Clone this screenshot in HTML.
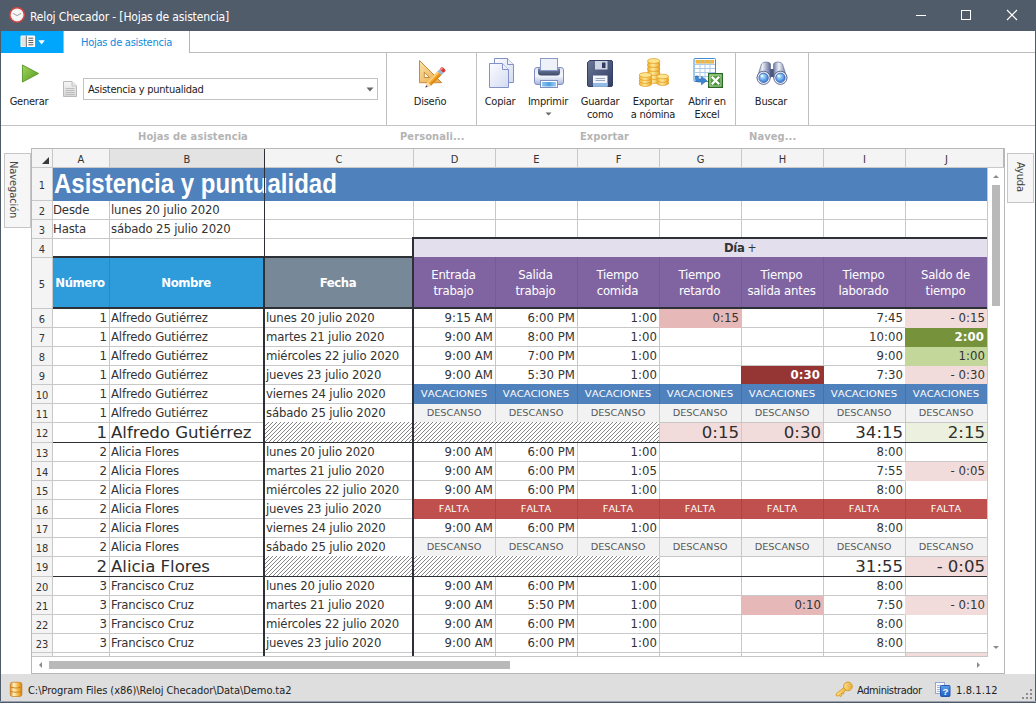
<!DOCTYPE html>
<html lang="es"><head><meta charset="utf-8"><title>Reloj Checador - [Hojas de asistencia]</title>
<style>
html,body{margin:0;padding:0;}
body{width:1036px;height:703px;overflow:hidden;background:#fff;position:relative;font-family:'DejaVu Sans Condensed','Liberation Sans',sans-serif;font-size:11px;color:#222;}
div{position:absolute;box-sizing:border-box;white-space:nowrap;overflow:hidden;}
svg{position:absolute;overflow:visible;}
.c{font-family:'DejaVu Sans Condensed','Liberation Sans',sans-serif;font-size:13px;line-height:17px;color:#333;letter-spacing:-0.15px;}
.r{text-align:right;padding-right:2px;letter-spacing:0.05px;}
.l{text-align:left;padding-left:1px;}
.m{text-align:center;}
.rh{font-family:'DejaVu Sans Condensed','Liberation Sans',sans-serif;font-size:11px;color:#333;text-align:center;background:#f4f4f4;}
.tag{font-family:'DejaVu Sans','Liberation Sans',sans-serif;font-size:9px;line-height:18px;text-align:center;font-kerning:none;}
.big{font-family:'DejaVu Sans','Liberation Sans',sans-serif;font-size:16.6px;line-height:19px;color:#2e2e2e;letter-spacing:-0.03px;}
.lbl{font-size:11px;color:#222;text-align:center;line-height:13px;letter-spacing:-0.25px;}
.cap{font-size:11px;font-weight:bold;color:#b4b4b4;letter-spacing:0.1px;}
.ph{font-family:'DejaVu Sans Condensed','Liberation Sans',sans-serif;font-size:13px;color:#fff;text-align:center;line-height:16px;background:#8064a2;letter-spacing:-0.2px;}
</style></head><body>

<div style="left:0px;top:0px;width:1036px;height:703px;background:#fff;border:1px solid #4f5a69;border-top:0;"></div>
<div style="left:0px;top:0px;width:1036px;height:31px;background:#515c6b;"></div>
<svg style="left:8px;top:6px" width="18" height="18" viewBox="0 0 18 18"><circle cx="9.1" cy="8.9" r="7.2" fill="#ececec" stroke="#d8423c" stroke-width="1.4"/><circle cx="9.1" cy="8.9" r="5.6" fill="#f7f7f7"/><path d="M5.2 7.4 L9.1 9.6 L13 7.4" fill="none" stroke="#9a9a9a" stroke-width="1"/></svg>
<div style="left:30px;top:8px;width:400px;height:18px;color:#fff;font-size:12px;line-height:18px;letter-spacing:-0.15px;">Reloj Checador - [Hojas de asistencia]</div>
<svg style="left:900px;top:0" width="136" height="31" viewBox="0 0 136 31"><path d="M16 15.5H26" stroke="#fff" stroke-width="1"/><rect x="61.5" y="10.5" width="9" height="9" fill="none" stroke="#fff" stroke-width="1"/><path d="M107 10L117 20M117 10L107 20" stroke="#fff" stroke-width="1.1"/></svg>
<div style="left:1px;top:31px;width:62px;height:22px;background:#00a5fc;"></div>
<svg style="left:20px;top:35px" width="26" height="13" viewBox="0 0 26 13"><rect x="0.5" y="0.5" width="14.6" height="11.6" rx="1.2" fill="#fff"/><rect x="1.4" y="1.4" width="4.2" height="9.8" fill="#e4e4e4"/><path d="M6.3 0.8V12" stroke="#555" stroke-width="0.9"/><path d="M8.4 3.2H13.3M8.4 5.4H13.3M8.4 7.6H13.3M8.4 9.8H13.3" stroke="#444" stroke-width="0.9"/><path d="M18.4 5.3h6.4l-3.2 4.2z" fill="#fff"/></svg>
<div style="left:189px;top:52px;width:846px;height:1px;background:#bdbdbd;"></div>
<div style="left:63px;top:31px;width:127px;height:22px;border:1px solid #b4b4b4;border-top:0;border-bottom:0;background:#fff;color:#0d8bdc;font-size:11px;line-height:24px;text-align:center;letter-spacing:-0.25px;">Hojas de asistencia</div>
<div style="left:1px;top:125px;width:1034px;height:1px;background:#c4c4c4;"></div>
<div style="left:386px;top:53px;width:1px;height:72px;background:#c0c0c0;"></div>
<div style="left:476px;top:53px;width:1px;height:72px;background:#c0c0c0;"></div>
<div style="left:735px;top:53px;width:1px;height:72px;background:#c0c0c0;"></div>
<div style="left:808px;top:53px;width:1px;height:72px;background:#c0c0c0;"></div>
<svg style="left:21px;top:63px" width="19" height="22" viewBox="0 0 20 22"><defs><linearGradient id="gp" x1="0" y1="0" x2="1" y2="1"><stop offset="0" stop-color="#a6d55a"/><stop offset="1" stop-color="#4e9a1e"/></linearGradient></defs><path d="M1.5 1.5L18.5 10.5L1.5 19.5Z" fill="url(#gp)" stroke="#5a9a2a" stroke-width="1"/></svg>
<div class="lbl" style="left:0px;top:95px;width:58px;height:14px;">Generar</div>
<svg style="left:62px;top:81px" width="16" height="17" viewBox="0 0 16 17"><defs><linearGradient id="gd" x1="0" y1="0" x2="0" y2="1"><stop offset="0" stop-color="#f6f6f6"/><stop offset="1" stop-color="#d6d6d6"/></linearGradient></defs><path d="M1.5 0.5H10L14.5 5V15.5H1.5Z" fill="url(#gd)" stroke="#b9b9b9"/><path d="M10 0.5V5H14.5" fill="#e9e9e9" stroke="#c4c4c4"/><path d="M3.5 7.5H12.5M3.5 9.5H12.5M3.5 11.5H12.5M3.5 13.5H12.5" stroke="#bdbdbd"/></svg>
<div style="left:83px;top:78px;width:295px;height:22px;border:1px solid #c3c3c3;background:#fff;font-size:11px;line-height:22px;padding-left:4px;color:#222;letter-spacing:-0.25px;">Asistencia y puntualidad</div>
<svg style="left:366px;top:87px" width="8" height="5" viewBox="0 0 8 5"><path d="M0.5 0.5H7.5L4 4.5Z" fill="#666"/></svg>
<div class="lbl" style="left:395px;top:95px;width:70px;height:14px;">Diseño</div>
<div class="lbl" style="left:465px;top:95px;width:70px;height:14px;">Copiar</div>
<div class="lbl" style="left:513px;top:95px;width:70px;height:14px;">Imprimir</div>
<div class="lbl" style="left:565px;top:95px;width:70px;height:14px;">Guardar</div>
<div class="lbl" style="left:565px;top:108px;width:70px;height:14px;">como</div>
<div class="lbl" style="left:618px;top:95px;width:70px;height:14px;">Exportar</div>
<div class="lbl" style="left:618px;top:108px;width:70px;height:14px;">a nómina</div>
<div class="lbl" style="left:672px;top:95px;width:70px;height:14px;">Abrir en</div>
<div class="lbl" style="left:672px;top:108px;width:70px;height:14px;">Excel</div>
<div class="lbl" style="left:736px;top:95px;width:70px;height:14px;">Buscar</div>
<svg style="left:545px;top:112px" width="7" height="4" viewBox="0 0 7 4"><path d="M0.5 0.5H6.5L3.5 3.5Z" fill="#666"/></svg>
<svg style="left:0;top:0" width="1036" height="126" viewBox="0 0 1036 126">
<defs>
<linearGradient id="gTri" x1="0" y1="0" x2="1" y2="1"><stop offset="0" stop-color="#fbe3a8"/><stop offset="1" stop-color="#e9a94a"/></linearGradient>
<linearGradient id="gPage" x1="0" y1="0" x2="1" y2="1"><stop offset="0" stop-color="#fbfcff"/><stop offset="1" stop-color="#d4dbf1"/></linearGradient>
<linearGradient id="gPrn" x1="0" y1="0" x2="0" y2="1"><stop offset="0" stop-color="#dfe5f5"/><stop offset="0.5" stop-color="#f4f6fc"/><stop offset="1" stop-color="#a9b6dc"/></linearGradient>
<linearGradient id="gSlot" x1="0" y1="0" x2="0" y2="1"><stop offset="0" stop-color="#7482a6"/><stop offset="1" stop-color="#3d4866"/></linearGradient>
<linearGradient id="gBlueP" x1="0" y1="0" x2="1" y2="0"><stop offset="0" stop-color="#8fc5f0"/><stop offset="0.5" stop-color="#4f9fe0"/><stop offset="1" stop-color="#9fd0f4"/></linearGradient>
<linearGradient id="gFlop" x1="0" y1="0" x2="1" y2="1"><stop offset="0" stop-color="#6b7795"/><stop offset="1" stop-color="#2f3b63"/></linearGradient>
<linearGradient id="gCoin" x1="0" y1="0" x2="1" y2="0"><stop offset="0" stop-color="#f4b332"/><stop offset="0.45" stop-color="#fde89a"/><stop offset="1" stop-color="#eea520"/></linearGradient>
<linearGradient id="gBar" x1="0" y1="0" x2="1" y2="0"><stop offset="0" stop-color="#6f7da3"/><stop offset="0.4" stop-color="#eef1f8"/><stop offset="1" stop-color="#59678f"/></linearGradient>
<radialGradient id="gLens" cx="0.4" cy="0.35" r="0.7"><stop offset="0" stop-color="#cfe6fb"/><stop offset="0.5" stop-color="#6fb0ee"/><stop offset="1" stop-color="#2f6fd0"/></radialGradient>
<linearGradient id="gXl" x1="0" y1="0" x2="1" y2="1"><stop offset="0" stop-color="#6fb04a"/><stop offset="1" stop-color="#2f7d2a"/></linearGradient>
</defs>
<!-- Diseño -->
<path d="M419.5 60.5V82.7H441.7Z M424.3 72.2L429.6 77.5H424.3Z" fill="url(#gTri)" fill-rule="evenodd" stroke="#c98a35" stroke-width="1" stroke-linejoin="round"/>
<g transform="translate(425.4 87.5) rotate(-45.5)">
<path d="M0 0L5.5 -2.6H20.5V2.6H5.5Z" fill="#f3a62c"/>
<path d="M5.5 -2.6H20.5V-0.9H5.5Z" fill="#fbd27a"/>
<path d="M5.5 0.9H20.5V2.6H5.5Z" fill="#d98714"/>
<path d="M0 0L5.5 -2.6V2.6Z" fill="#f6dcb0"/>
<path d="M0 0L2.2 -1.05V1.05Z" fill="#2d3f78"/>
<rect x="20" y="-2.7" width="3" height="5.4" fill="#9fb3d8"/>
<rect x="23" y="-2.7" width="3.6" height="5.4" rx="1" fill="#cf3a33"/>
<rect x="23" y="-2.7" width="3.6" height="2" rx="1" fill="#ef8a80"/>
</g>
<!-- Copiar -->
<path d="M494.5 58.5H507.5L513.5 64.5V82.5H494.5Z" fill="url(#gPage)" stroke="#8392c6" stroke-width="1" stroke-linejoin="round"/>
<path d="M507.5 58.5V64.5H513.5" fill="#eef1fb" stroke="#8392c6" stroke-width="1" stroke-linejoin="round"/>
<path d="M489.5 63.5H502.5L508.5 69.5V87.5H489.5Z" fill="url(#gPage)" stroke="#8392c6" stroke-width="1" stroke-linejoin="round"/>
<path d="M502.5 63.5V69.5H508.5" fill="#eef1fb" stroke="#8392c6" stroke-width="1" stroke-linejoin="round"/>
<!-- Imprimir -->
<rect x="534.5" y="67.5" width="29" height="17" rx="2.5" fill="url(#gPrn)" stroke="#7f8fc2"/>
<path d="M538 68.5H560V72.5Q560 75.5 557 75.5H541Q538 75.5 538 72.5Z" fill="url(#gSlot)"/>
<rect x="540.5" y="58.5" width="17" height="12" fill="#eef1fa" stroke="#8a98c8"/>
<rect x="540.5" y="80.5" width="17" height="7" fill="#fff" stroke="#7f8fc2"/>
<rect x="542" y="82" width="14" height="4.5" fill="url(#gBlueP)"/>
<!-- Guardar -->
<path d="M589.5 60.5H611Q612.5 60.5 612.5 62V85Q612.5 86.5 611 86.5H589Q587.5 86.5 587.5 85V62.5Z" fill="url(#gFlop)" stroke="#333f66"/>
<rect x="595" y="61" width="12.5" height="8.5" fill="#cfd5e4"/>
<rect x="602" y="62.5" width="3.5" height="5.5" fill="#2f3b63"/>
<rect x="593" y="75.5" width="14.5" height="11" fill="#f4f6fb"/>
<rect x="593" y="83" width="14.5" height="3.5" fill="#8ebbe8"/>
<path d="M595.5 78.5H605M595.5 80.5H605" stroke="#9aa6c6" stroke-width="1"/>
<!-- Exportar a nómina : coins -->
<g stroke="#e09a1c" stroke-width="0.7">
<g id="cs1"><rect x="647.5" y="61" width="12.5" height="20" fill="url(#gCoin)" stroke="none"/>
<ellipse cx="653.7" cy="81" rx="6.2" ry="2.4" fill="url(#gCoin)"/>
<ellipse cx="653.7" cy="77" rx="6.2" ry="2.4" fill="url(#gCoin)"/>
<ellipse cx="653.7" cy="73" rx="6.2" ry="2.4" fill="url(#gCoin)"/>
<ellipse cx="653.7" cy="69" rx="6.2" ry="2.4" fill="url(#gCoin)"/>
<ellipse cx="653.7" cy="65" rx="6.2" ry="2.4" fill="url(#gCoin)"/>
<ellipse cx="653.7" cy="61" rx="6.2" ry="2.4" fill="#fde48e"/></g>
<rect x="639.2" y="75" width="12.4" height="9" fill="url(#gCoin)" stroke="none"/>
<ellipse cx="645.4" cy="84" rx="6.2" ry="2.4" fill="url(#gCoin)"/>
<ellipse cx="645.4" cy="81" rx="6.2" ry="2.4" fill="url(#gCoin)"/>
<ellipse cx="645.4" cy="78" rx="6.2" ry="2.4" fill="url(#gCoin)"/>
<ellipse cx="645.4" cy="75" rx="6.2" ry="2.4" fill="#fde48e"/>
<rect x="656.8" y="76" width="11.8" height="7.5" fill="url(#gCoin)" stroke="none"/>
<ellipse cx="662.7" cy="83.2" rx="5.9" ry="2.3" fill="url(#gCoin)"/>
<ellipse cx="662.7" cy="80" rx="5.9" ry="2.3" fill="url(#gCoin)"/>
<ellipse cx="662.7" cy="76.5" rx="5.9" ry="2.3" fill="#fde48e"/>
</g>
<!-- Abrir en Excel -->
<rect x="694" y="58.5" width="21.5" height="23" rx="1" fill="#fff" stroke="#3f8fd0"/>
<rect x="695.5" y="60" width="18.5" height="3.6" fill="#f3b43a"/>
<path d="M695 64.5H715M695 68.5H715M695 72.5H715M695 76.5H715M700 60V81M705 60V81M710 60V81" stroke="#a9cbe8" stroke-width="1"/>
<path d="M695.5 76V79.5Q695.5 82 698.5 82H701.5V84.8L706.8 80.6L701.5 76.4V79H699Q698.3 79 698.3 78V76Z" fill="#3f86d2" stroke="#2a62a8" stroke-width="0.6"/>
<rect x="708.5" y="73.5" width="14" height="14" fill="url(#gXl)" stroke="#2a6a26"/>
<rect x="710" y="75" width="11" height="11" fill="none" stroke="#cfe6c4" stroke-width="0.8"/>
<path d="M711.8 76.8L719.2 84.2M719.2 76.8L711.8 84.2" stroke="#fff" stroke-width="2.2"/>
<!-- Buscar -->
<rect x="768.5" y="69" width="7" height="8" fill="#4a5680"/>
<path d="M761.5 64Q762.5 62 766 62Q770 62 770.5 64L770.5 78H757Z" fill="url(#gBar)" stroke="#55628a" stroke-width="0.6"/>
<path d="M782.5 64Q781.5 62 778 62Q774 62 773.5 64L773.5 78H787Z" fill="url(#gBar)" stroke="#55628a" stroke-width="0.6"/>
<circle cx="763.6" cy="77.8" r="6.6" fill="#eef1f8" stroke="#4f5c86" stroke-width="0.9"/>
<circle cx="780.4" cy="77.8" r="6.6" fill="#eef1f8" stroke="#4f5c86" stroke-width="0.9"/>
<circle cx="763.6" cy="77.8" r="4.7" fill="url(#gLens)" stroke="#2c55a8" stroke-width="0.7"/>
<circle cx="780.4" cy="77.8" r="4.7" fill="url(#gLens)" stroke="#2c55a8" stroke-width="0.7"/>
<circle cx="762" cy="76" r="1.3" fill="#eaf4fd"/><circle cx="778.8" cy="76" r="1.3" fill="#eaf4fd"/>
</svg>

<div class="cap" style="left:138px;top:130px;width:140px;height:14px;">Hojas de asistencia</div>
<div class="cap" style="left:400px;top:130px;width:80px;height:14px;">Personali...</div>
<div class="cap" style="left:580px;top:130px;width:80px;height:14px;">Exportar</div>
<div class="cap" style="left:749px;top:130px;width:80px;height:14px;">Naveg...</div>
<div style="left:4px;top:153px;width:27px;height:75px;border:1px solid #c6c6c6;background:#f6f6f6;"></div>
<div style="left:3px;top:161px;width:20px;height:64px;writing-mode:vertical-rl;font-size:11px;color:#444;line-height:20px;letter-spacing:-0.1px;">Navegación</div>
<div style="left:1007px;top:153px;width:27px;height:50px;border:1px solid #c6c6c6;background:#f6f6f6;"></div>
<div style="left:1010px;top:162px;width:20px;height:40px;writing-mode:vertical-rl;font-size:11px;color:#444;line-height:20px;letter-spacing:-0.1px;">Ayuda</div>
<svg width="0" height="0" style="left:0;top:0"><defs><pattern id="hatch" width="4" height="4" patternUnits="userSpaceOnUse"><rect width="4" height="4" fill="#fff"/><path d="M-1 1L1 -1M-0.5 4.5L4.5 -0.5M3 5L5 3" stroke="#5a5a5a" stroke-width="0.75"/></pattern></defs></svg>
<div style="left:31px;top:148px;width:974px;height:526px;border:1px solid #b8b8b8;background:#fff;"></div>
<div style="left:32px;top:149px;width:971px;height:18px;background:#f4f4f4;"></div>
<div style="left:1003px;top:149px;width:1px;height:19px;background:#b8b8b8;"></div>
<div style="left:32px;top:149px;width:21px;height:507px;background:#f4f4f4;"></div>
<div style="left:110px;top:149px;width:154px;height:18px;background:#e3e3e3;"></div>
<svg style="left:42px;top:157px" width="7" height="7" viewBox="0 0 7 7"><path d="M7 0V7H0Z" fill="#3a3a3a"/></svg>
<div style="left:32px;top:167px;width:972px;height:1px;background:#c8c8c8;"></div>
<div style="left:32px;top:200px;width:956px;height:1px;background:#c8c8c8;"></div>
<div style="left:32px;top:219px;width:956px;height:1px;background:#c8c8c8;"></div>
<div style="left:32px;top:238px;width:956px;height:1px;background:#c8c8c8;"></div>
<div style="left:32px;top:257px;width:956px;height:1px;background:#c8c8c8;"></div>
<div style="left:32px;top:308px;width:956px;height:1px;background:#c8c8c8;"></div>
<div style="left:32px;top:327px;width:956px;height:1px;background:#c8c8c8;"></div>
<div style="left:32px;top:346px;width:956px;height:1px;background:#c8c8c8;"></div>
<div style="left:32px;top:365px;width:956px;height:1px;background:#c8c8c8;"></div>
<div style="left:32px;top:384px;width:956px;height:1px;background:#c8c8c8;"></div>
<div style="left:32px;top:403px;width:956px;height:1px;background:#c8c8c8;"></div>
<div style="left:32px;top:422px;width:956px;height:1px;background:#c8c8c8;"></div>
<div style="left:32px;top:442px;width:956px;height:1px;background:#c8c8c8;"></div>
<div style="left:32px;top:461px;width:956px;height:1px;background:#c8c8c8;"></div>
<div style="left:32px;top:480px;width:956px;height:1px;background:#c8c8c8;"></div>
<div style="left:32px;top:499px;width:956px;height:1px;background:#c8c8c8;"></div>
<div style="left:32px;top:518px;width:956px;height:1px;background:#c8c8c8;"></div>
<div style="left:32px;top:537px;width:956px;height:1px;background:#c8c8c8;"></div>
<div style="left:32px;top:556px;width:956px;height:1px;background:#c8c8c8;"></div>
<div style="left:32px;top:576px;width:956px;height:1px;background:#c8c8c8;"></div>
<div style="left:32px;top:595px;width:956px;height:1px;background:#c8c8c8;"></div>
<div style="left:32px;top:614px;width:956px;height:1px;background:#c8c8c8;"></div>
<div style="left:32px;top:633px;width:956px;height:1px;background:#c8c8c8;"></div>
<div style="left:32px;top:652px;width:956px;height:1px;background:#c8c8c8;"></div>
<div style="left:52px;top:149px;width:1px;height:507px;background:#c8c8c8;"></div>
<div style="left:109px;top:149px;width:1px;height:507px;background:#c8c8c8;"></div>
<div style="left:53px;top:149px;width:56px;height:18px;font-size:11px;color:#333;text-align:center;line-height:19px;padding-top:1px;">A</div>
<div style="left:264px;top:149px;width:1px;height:507px;background:#c8c8c8;"></div>
<div style="left:110px;top:149px;width:154px;height:18px;font-size:11px;color:#333;text-align:center;line-height:19px;padding-top:1px;">B</div>
<div style="left:413px;top:149px;width:1px;height:507px;background:#c8c8c8;"></div>
<div style="left:265px;top:149px;width:148px;height:18px;font-size:11px;color:#333;text-align:center;line-height:19px;padding-top:1px;">C</div>
<div style="left:495px;top:149px;width:1px;height:507px;background:#c8c8c8;"></div>
<div style="left:414px;top:149px;width:81px;height:18px;font-size:11px;color:#333;text-align:center;line-height:19px;padding-top:1px;">D</div>
<div style="left:577px;top:149px;width:1px;height:507px;background:#c8c8c8;"></div>
<div style="left:496px;top:149px;width:81px;height:18px;font-size:11px;color:#333;text-align:center;line-height:19px;padding-top:1px;">E</div>
<div style="left:659px;top:149px;width:1px;height:507px;background:#c8c8c8;"></div>
<div style="left:578px;top:149px;width:81px;height:18px;font-size:11px;color:#333;text-align:center;line-height:19px;padding-top:1px;">F</div>
<div style="left:741px;top:149px;width:1px;height:507px;background:#c8c8c8;"></div>
<div style="left:660px;top:149px;width:81px;height:18px;font-size:11px;color:#333;text-align:center;line-height:19px;padding-top:1px;">G</div>
<div style="left:823px;top:149px;width:1px;height:507px;background:#c8c8c8;"></div>
<div style="left:742px;top:149px;width:81px;height:18px;font-size:11px;color:#333;text-align:center;line-height:19px;padding-top:1px;">H</div>
<div style="left:905px;top:149px;width:1px;height:507px;background:#c8c8c8;"></div>
<div style="left:824px;top:149px;width:81px;height:18px;font-size:11px;color:#333;text-align:center;line-height:19px;padding-top:1px;">I</div>
<div style="left:987px;top:168px;width:1px;height:488px;background:#c8c8c8;"></div>
<div style="left:906px;top:149px;width:81px;height:18px;font-size:11px;color:#333;text-align:center;line-height:19px;padding-top:1px;">J</div>
<div class="rh" style="left:32px;top:168px;width:20px;height:32px;line-height:33px;padding-top:1px;">1</div>
<div class="rh" style="left:32px;top:201px;width:20px;height:18px;line-height:19px;padding-top:1px;">2</div>
<div class="rh" style="left:32px;top:220px;width:20px;height:18px;line-height:19px;padding-top:1px;">3</div>
<div class="rh" style="left:32px;top:239px;width:20px;height:18px;line-height:19px;padding-top:1px;">4</div>
<div class="rh" style="left:32px;top:258px;width:20px;height:50px;line-height:51px;padding-top:1px;">5</div>
<div class="rh" style="left:32px;top:309px;width:20px;height:18px;line-height:19px;padding-top:1px;">6</div>
<div class="rh" style="left:32px;top:328px;width:20px;height:18px;line-height:19px;padding-top:1px;">7</div>
<div class="rh" style="left:32px;top:347px;width:20px;height:18px;line-height:19px;padding-top:1px;">8</div>
<div class="rh" style="left:32px;top:366px;width:20px;height:18px;line-height:19px;padding-top:1px;">9</div>
<div class="rh" style="left:32px;top:385px;width:20px;height:18px;line-height:19px;padding-top:1px;">10</div>
<div class="rh" style="left:32px;top:404px;width:20px;height:18px;line-height:19px;padding-top:1px;">11</div>
<div class="rh" style="left:32px;top:423px;width:20px;height:19px;line-height:20px;padding-top:1px;">12</div>
<div class="rh" style="left:32px;top:443px;width:20px;height:18px;line-height:19px;padding-top:1px;">13</div>
<div class="rh" style="left:32px;top:462px;width:20px;height:18px;line-height:19px;padding-top:1px;">14</div>
<div class="rh" style="left:32px;top:481px;width:20px;height:18px;line-height:19px;padding-top:1px;">15</div>
<div class="rh" style="left:32px;top:500px;width:20px;height:18px;line-height:19px;padding-top:1px;">16</div>
<div class="rh" style="left:32px;top:519px;width:20px;height:18px;line-height:19px;padding-top:1px;">17</div>
<div class="rh" style="left:32px;top:538px;width:20px;height:18px;line-height:19px;padding-top:1px;">18</div>
<div class="rh" style="left:32px;top:557px;width:20px;height:19px;line-height:20px;padding-top:1px;">19</div>
<div class="rh" style="left:32px;top:577px;width:20px;height:18px;line-height:19px;padding-top:1px;">20</div>
<div class="rh" style="left:32px;top:596px;width:20px;height:18px;line-height:19px;padding-top:1px;">21</div>
<div class="rh" style="left:32px;top:615px;width:20px;height:18px;line-height:19px;padding-top:1px;">22</div>
<div class="rh" style="left:32px;top:634px;width:20px;height:18px;line-height:19px;padding-top:1px;">23</div>
<div style="left:53px;top:168px;width:934px;height:33px;background:#4f81bd;"></div>
<div style="left:54px;top:168px;width:340px;height:32px;color:#fff;font-family:'Liberation Sans',sans-serif;font-size:27.5px;font-weight:bold;line-height:32px;transform:scaleX(0.873);transform-origin:0 0;">Asistencia y puntualidad</div>
<div class="c l" style="left:53px;top:201px;width:56px;height:18px;padding-left:0;">Desde</div>
<div class="c l" style="left:110px;top:201px;width:154px;height:18px;">lunes 20 julio 2020</div>
<div class="c l" style="left:53px;top:220px;width:56px;height:18px;padding-left:0;">Hasta</div>
<div class="c l" style="left:110px;top:220px;width:154px;height:18px;">sábado 25 julio 2020</div>
<div style="left:414px;top:239px;width:573px;height:18px;background:#e4dfec;"></div>
<div style="left:414px;top:239px;width:573px;height:18px;font-family:'DejaVu Sans Condensed','Liberation Sans',sans-serif;font-size:13px;font-weight:bold;color:#333;line-height:17px;text-align:left;padding-left:310px;letter-spacing:-0.4px;">Día<span style="font-weight:normal;margin-left:3px;font-size:12px;">+</span></div>
<div style="left:53px;top:258px;width:57px;height:50px;background:#2e9bdb;"></div>
<div style="left:110px;top:258px;width:154px;height:50px;background:#2e9bdb;"></div>
<div style="left:109px;top:258px;width:1px;height:50px;background:#2b88bf;"></div>
<div style="left:52px;top:258px;width:56px;height:50px;color:#fff;font-weight:bold;font-size:13px;line-height:50px;text-align:center;letter-spacing:-0.45px;">Número</div>
<div style="left:109px;top:258px;width:154px;height:50px;color:#fff;font-weight:bold;font-size:13px;line-height:50px;text-align:center;letter-spacing:-0.45px;">Nombre</div>
<div style="left:265px;top:258px;width:148px;height:50px;background:#778899;"></div>
<div style="left:264px;top:258px;width:148px;height:50px;color:#fff;font-weight:bold;font-size:13px;line-height:50px;text-align:center;letter-spacing:-0.45px;">Fecha</div>
<div style="left:414px;top:257px;width:573px;height:50px;background:#8064a2;"></div>
<div class="ph" style="left:413px;top:267px;width:81px;height:36px;background:transparent;">Entrada<br>trabajo</div>
<div class="ph" style="left:495px;top:267px;width:81px;height:36px;background:transparent;">Salida<br>trabajo</div>
<div style="left:495px;top:257px;width:1px;height:50px;background:#75599a;"></div>
<div class="ph" style="left:577px;top:267px;width:81px;height:36px;background:transparent;">Tiempo<br>comida</div>
<div style="left:577px;top:257px;width:1px;height:50px;background:#75599a;"></div>
<div class="ph" style="left:659px;top:267px;width:81px;height:36px;background:transparent;">Tiempo<br>retardo</div>
<div style="left:659px;top:257px;width:1px;height:50px;background:#75599a;"></div>
<div class="ph" style="left:741px;top:267px;width:81px;height:36px;background:transparent;">Tiempo<br>salida antes</div>
<div style="left:741px;top:257px;width:1px;height:50px;background:#75599a;"></div>
<div class="ph" style="left:823px;top:267px;width:81px;height:36px;background:transparent;">Tiempo<br>laborado</div>
<div style="left:823px;top:257px;width:1px;height:50px;background:#75599a;"></div>
<div class="ph" style="left:905px;top:267px;width:81px;height:36px;background:transparent;">Saldo de<br>tiempo</div>
<div style="left:905px;top:257px;width:1px;height:50px;background:#75599a;"></div>
<div class="c r" style="left:53px;top:309px;width:56px;height:18px;">1</div>
<div class="c l" style="left:110px;top:309px;width:154px;height:18px;">Alfredo Gutiérrez</div>
<div class="c l" style="left:265px;top:309px;width:148px;height:18px;">lunes 20 julio 2020</div>
<div class="c r" style="left:414px;top:309px;width:81px;height:18px;">9:15 AM</div>
<div class="c r" style="left:496px;top:309px;width:81px;height:18px;">6:00 PM</div>
<div class="c r" style="left:578px;top:309px;width:81px;height:18px;">1:00</div>
<div style="left:659px;top:309px;width:83px;height:19px;background:#e6b8b7;"></div>
<div class="c r" style="left:660px;top:309px;width:81px;height:18px;">0:15</div>
<div class="c r" style="left:824px;top:309px;width:81px;height:18px;">7:45</div>
<div style="left:905px;top:309px;width:82px;height:19px;background:#f2dcdb;"></div>
<div class="c r" style="left:906px;top:309px;width:81px;height:18px;">- 0:15</div>
<div class="c r" style="left:53px;top:328px;width:56px;height:18px;">1</div>
<div class="c l" style="left:110px;top:328px;width:154px;height:18px;">Alfredo Gutiérrez</div>
<div class="c l" style="left:265px;top:328px;width:148px;height:18px;">martes 21 julio 2020</div>
<div class="c r" style="left:414px;top:328px;width:81px;height:18px;">9:00 AM</div>
<div class="c r" style="left:496px;top:328px;width:81px;height:18px;">8:00 PM</div>
<div class="c r" style="left:578px;top:328px;width:81px;height:18px;">1:00</div>
<div class="c r" style="left:824px;top:328px;width:81px;height:18px;">10:00</div>
<div style="left:905px;top:328px;width:82px;height:19px;background:#76933c;"></div>
<div class="c r" style="left:906px;top:328px;width:81px;height:18px;color:#fff;font-weight:bold;letter-spacing:0.1px;padding-right:3px;">2:00</div>
<div class="c r" style="left:53px;top:347px;width:56px;height:18px;">1</div>
<div class="c l" style="left:110px;top:347px;width:154px;height:18px;">Alfredo Gutiérrez</div>
<div class="c l" style="left:265px;top:347px;width:148px;height:18px;">miércoles 22 julio 2020</div>
<div class="c r" style="left:414px;top:347px;width:81px;height:18px;">9:00 AM</div>
<div class="c r" style="left:496px;top:347px;width:81px;height:18px;">7:00 PM</div>
<div class="c r" style="left:578px;top:347px;width:81px;height:18px;">1:00</div>
<div class="c r" style="left:824px;top:347px;width:81px;height:18px;">9:00</div>
<div style="left:905px;top:347px;width:82px;height:19px;background:#c4d79b;"></div>
<div class="c r" style="left:906px;top:347px;width:81px;height:18px;">1:00</div>
<div class="c r" style="left:53px;top:366px;width:56px;height:18px;">1</div>
<div class="c l" style="left:110px;top:366px;width:154px;height:18px;">Alfredo Gutiérrez</div>
<div class="c l" style="left:265px;top:366px;width:148px;height:18px;">jueves 23 julio 2020</div>
<div class="c r" style="left:414px;top:366px;width:81px;height:18px;">9:00 AM</div>
<div class="c r" style="left:496px;top:366px;width:81px;height:18px;">5:30 PM</div>
<div class="c r" style="left:578px;top:366px;width:81px;height:18px;">1:00</div>
<div style="left:741px;top:366px;width:83px;height:19px;background:#963634;"></div>
<div class="c r" style="left:742px;top:366px;width:81px;height:18px;color:#fff;font-weight:bold;letter-spacing:0.1px;padding-right:3px;">0:30</div>
<div class="c r" style="left:824px;top:366px;width:81px;height:18px;">7:30</div>
<div style="left:905px;top:366px;width:82px;height:19px;background:#f2dcdb;"></div>
<div class="c r" style="left:906px;top:366px;width:81px;height:18px;">- 0:30</div>
<div class="c r" style="left:53px;top:385px;width:56px;height:18px;">1</div>
<div class="c l" style="left:110px;top:385px;width:154px;height:18px;">Alfredo Gutiérrez</div>
<div class="c l" style="left:265px;top:385px;width:148px;height:18px;">viernes 24 julio 2020</div>
<div style="left:414px;top:384px;width:573px;height:20px;background:#4f81bd;"></div>
<div class="tag" style="left:413px;top:385px;width:82px;height:18px;color:#fff;transform:scaleX(1.128);overflow:visible;">VACACIONES</div>
<div style="left:495px;top:384px;width:1px;height:20px;background:#4473ab;"></div>
<div class="tag" style="left:495px;top:385px;width:82px;height:18px;color:#fff;transform:scaleX(1.128);overflow:visible;">VACACIONES</div>
<div style="left:577px;top:384px;width:1px;height:20px;background:#4473ab;"></div>
<div class="tag" style="left:577px;top:385px;width:82px;height:18px;color:#fff;transform:scaleX(1.128);overflow:visible;">VACACIONES</div>
<div style="left:659px;top:384px;width:1px;height:20px;background:#4473ab;"></div>
<div class="tag" style="left:659px;top:385px;width:82px;height:18px;color:#fff;transform:scaleX(1.128);overflow:visible;">VACACIONES</div>
<div style="left:741px;top:384px;width:1px;height:20px;background:#4473ab;"></div>
<div class="tag" style="left:741px;top:385px;width:82px;height:18px;color:#fff;transform:scaleX(1.128);overflow:visible;">VACACIONES</div>
<div style="left:823px;top:384px;width:1px;height:20px;background:#4473ab;"></div>
<div class="tag" style="left:823px;top:385px;width:82px;height:18px;color:#fff;transform:scaleX(1.128);overflow:visible;">VACACIONES</div>
<div style="left:905px;top:384px;width:1px;height:20px;background:#4473ab;"></div>
<div class="tag" style="left:905px;top:385px;width:82px;height:18px;color:#fff;transform:scaleX(1.128);overflow:visible;">VACACIONES</div>
<div class="c r" style="left:53px;top:404px;width:56px;height:18px;">1</div>
<div class="c l" style="left:110px;top:404px;width:154px;height:18px;">Alfredo Gutiérrez</div>
<div class="c l" style="left:265px;top:404px;width:148px;height:18px;">sábado 25 julio 2020</div>
<div style="left:414px;top:404px;width:573px;height:18px;background:#f2f2f2;"></div>
<div class="tag" style="left:413px;top:404px;width:82px;height:18px;color:#595959;transform:scaleX(1.087);overflow:visible;">DESCANSO</div>
<div style="left:495px;top:404px;width:1px;height:18px;background:#c8c8c8;"></div>
<div class="tag" style="left:495px;top:404px;width:82px;height:18px;color:#595959;transform:scaleX(1.087);overflow:visible;">DESCANSO</div>
<div style="left:577px;top:404px;width:1px;height:18px;background:#c8c8c8;"></div>
<div class="tag" style="left:577px;top:404px;width:82px;height:18px;color:#595959;transform:scaleX(1.087);overflow:visible;">DESCANSO</div>
<div style="left:659px;top:404px;width:1px;height:18px;background:#c8c8c8;"></div>
<div class="tag" style="left:659px;top:404px;width:82px;height:18px;color:#595959;transform:scaleX(1.087);overflow:visible;">DESCANSO</div>
<div style="left:741px;top:404px;width:1px;height:18px;background:#c8c8c8;"></div>
<div class="tag" style="left:741px;top:404px;width:82px;height:18px;color:#595959;transform:scaleX(1.087);overflow:visible;">DESCANSO</div>
<div style="left:823px;top:404px;width:1px;height:18px;background:#c8c8c8;"></div>
<div class="tag" style="left:823px;top:404px;width:82px;height:18px;color:#595959;transform:scaleX(1.087);overflow:visible;">DESCANSO</div>
<div style="left:905px;top:404px;width:1px;height:18px;background:#c8c8c8;"></div>
<div class="tag" style="left:905px;top:404px;width:82px;height:18px;color:#595959;transform:scaleX(1.087);overflow:visible;">DESCANSO</div>
<div class="big" style="left:53px;top:423px;width:56px;height:19px;text-align:right;padding-right:2px;">1</div>
<div class="big" style="left:110px;top:423px;width:154px;height:19px;text-align:left;padding-left:1px;">Alfredo Gutiérrez</div>
<svg style="left:265px;top:422px" width="394" height="20"><rect width="394" height="20" fill="url(#hatch)"/></svg>
<div style="left:660px;top:423px;width:81px;height:19px;background:#f2dcdb;"></div>
<div class="big" style="left:660px;top:423px;width:81px;height:19px;text-align:right;padding-right:2px;">0:15</div>
<div style="left:742px;top:423px;width:81px;height:19px;background:#f2dcdb;"></div>
<div class="big" style="left:742px;top:423px;width:81px;height:19px;text-align:right;padding-right:2px;">0:30</div>
<div class="big" style="left:824px;top:423px;width:81px;height:19px;text-align:right;padding-right:2px;">34:15</div>
<div style="left:906px;top:423px;width:81px;height:19px;background:#ebf1de;"></div>
<div class="big" style="left:906px;top:423px;width:81px;height:19px;text-align:right;padding-right:2px;">2:15</div>
<div class="c r" style="left:53px;top:443px;width:56px;height:18px;">2</div>
<div class="c l" style="left:110px;top:443px;width:154px;height:18px;">Alicia Flores</div>
<div class="c l" style="left:265px;top:443px;width:148px;height:18px;">lunes 20 julio 2020</div>
<div class="c r" style="left:414px;top:443px;width:81px;height:18px;">9:00 AM</div>
<div class="c r" style="left:496px;top:443px;width:81px;height:18px;">6:00 PM</div>
<div class="c r" style="left:578px;top:443px;width:81px;height:18px;">1:00</div>
<div class="c r" style="left:824px;top:443px;width:81px;height:18px;">8:00</div>
<div class="c r" style="left:53px;top:462px;width:56px;height:18px;">2</div>
<div class="c l" style="left:110px;top:462px;width:154px;height:18px;">Alicia Flores</div>
<div class="c l" style="left:265px;top:462px;width:148px;height:18px;">martes 21 julio 2020</div>
<div class="c r" style="left:414px;top:462px;width:81px;height:18px;">9:00 AM</div>
<div class="c r" style="left:496px;top:462px;width:81px;height:18px;">6:00 PM</div>
<div class="c r" style="left:578px;top:462px;width:81px;height:18px;">1:05</div>
<div class="c r" style="left:824px;top:462px;width:81px;height:18px;">7:55</div>
<div style="left:905px;top:462px;width:82px;height:19px;background:#f2dcdb;"></div>
<div class="c r" style="left:906px;top:462px;width:81px;height:18px;">- 0:05</div>
<div class="c r" style="left:53px;top:481px;width:56px;height:18px;">2</div>
<div class="c l" style="left:110px;top:481px;width:154px;height:18px;">Alicia Flores</div>
<div class="c l" style="left:265px;top:481px;width:148px;height:18px;">miércoles 22 julio 2020</div>
<div class="c r" style="left:414px;top:481px;width:81px;height:18px;">9:00 AM</div>
<div class="c r" style="left:496px;top:481px;width:81px;height:18px;">6:00 PM</div>
<div class="c r" style="left:578px;top:481px;width:81px;height:18px;">1:00</div>
<div class="c r" style="left:824px;top:481px;width:81px;height:18px;">8:00</div>
<div class="c r" style="left:53px;top:500px;width:56px;height:18px;">2</div>
<div class="c l" style="left:110px;top:500px;width:154px;height:18px;">Alicia Flores</div>
<div class="c l" style="left:265px;top:500px;width:148px;height:18px;">jueves 23 julio 2020</div>
<div style="left:414px;top:499px;width:573px;height:20px;background:#c0504d;"></div>
<div class="tag" style="left:413px;top:500px;width:82px;height:18px;color:#fff;transform:scaleX(1.08);overflow:visible;">FALTA</div>
<div style="left:495px;top:499px;width:1px;height:20px;background:#ab4643;"></div>
<div class="tag" style="left:495px;top:500px;width:82px;height:18px;color:#fff;transform:scaleX(1.08);overflow:visible;">FALTA</div>
<div style="left:577px;top:499px;width:1px;height:20px;background:#ab4643;"></div>
<div class="tag" style="left:577px;top:500px;width:82px;height:18px;color:#fff;transform:scaleX(1.08);overflow:visible;">FALTA</div>
<div style="left:659px;top:499px;width:1px;height:20px;background:#ab4643;"></div>
<div class="tag" style="left:659px;top:500px;width:82px;height:18px;color:#fff;transform:scaleX(1.08);overflow:visible;">FALTA</div>
<div style="left:741px;top:499px;width:1px;height:20px;background:#ab4643;"></div>
<div class="tag" style="left:741px;top:500px;width:82px;height:18px;color:#fff;transform:scaleX(1.08);overflow:visible;">FALTA</div>
<div style="left:823px;top:499px;width:1px;height:20px;background:#ab4643;"></div>
<div class="tag" style="left:823px;top:500px;width:82px;height:18px;color:#fff;transform:scaleX(1.08);overflow:visible;">FALTA</div>
<div style="left:905px;top:499px;width:1px;height:20px;background:#ab4643;"></div>
<div class="tag" style="left:905px;top:500px;width:82px;height:18px;color:#fff;transform:scaleX(1.08);overflow:visible;">FALTA</div>
<div class="c r" style="left:53px;top:519px;width:56px;height:18px;">2</div>
<div class="c l" style="left:110px;top:519px;width:154px;height:18px;">Alicia Flores</div>
<div class="c l" style="left:265px;top:519px;width:148px;height:18px;">viernes 24 julio 2020</div>
<div class="c r" style="left:414px;top:519px;width:81px;height:18px;">9:00 AM</div>
<div class="c r" style="left:496px;top:519px;width:81px;height:18px;">6:00 PM</div>
<div class="c r" style="left:578px;top:519px;width:81px;height:18px;">1:00</div>
<div class="c r" style="left:824px;top:519px;width:81px;height:18px;">8:00</div>
<div class="c r" style="left:53px;top:538px;width:56px;height:18px;">2</div>
<div class="c l" style="left:110px;top:538px;width:154px;height:18px;">Alicia Flores</div>
<div class="c l" style="left:265px;top:538px;width:148px;height:18px;">sábado 25 julio 2020</div>
<div style="left:414px;top:538px;width:573px;height:18px;background:#f2f2f2;"></div>
<div class="tag" style="left:413px;top:538px;width:82px;height:18px;color:#595959;transform:scaleX(1.087);overflow:visible;">DESCANSO</div>
<div style="left:495px;top:538px;width:1px;height:18px;background:#c8c8c8;"></div>
<div class="tag" style="left:495px;top:538px;width:82px;height:18px;color:#595959;transform:scaleX(1.087);overflow:visible;">DESCANSO</div>
<div style="left:577px;top:538px;width:1px;height:18px;background:#c8c8c8;"></div>
<div class="tag" style="left:577px;top:538px;width:82px;height:18px;color:#595959;transform:scaleX(1.087);overflow:visible;">DESCANSO</div>
<div style="left:659px;top:538px;width:1px;height:18px;background:#c8c8c8;"></div>
<div class="tag" style="left:659px;top:538px;width:82px;height:18px;color:#595959;transform:scaleX(1.087);overflow:visible;">DESCANSO</div>
<div style="left:741px;top:538px;width:1px;height:18px;background:#c8c8c8;"></div>
<div class="tag" style="left:741px;top:538px;width:82px;height:18px;color:#595959;transform:scaleX(1.087);overflow:visible;">DESCANSO</div>
<div style="left:823px;top:538px;width:1px;height:18px;background:#c8c8c8;"></div>
<div class="tag" style="left:823px;top:538px;width:82px;height:18px;color:#595959;transform:scaleX(1.087);overflow:visible;">DESCANSO</div>
<div style="left:905px;top:538px;width:1px;height:18px;background:#c8c8c8;"></div>
<div class="tag" style="left:905px;top:538px;width:82px;height:18px;color:#595959;transform:scaleX(1.087);overflow:visible;">DESCANSO</div>
<div class="big" style="left:53px;top:557px;width:56px;height:19px;text-align:right;padding-right:2px;">2</div>
<div class="big" style="left:110px;top:557px;width:154px;height:19px;text-align:left;padding-left:1px;">Alicia Flores</div>
<svg style="left:265px;top:556px" width="394" height="20"><rect width="394" height="20" fill="url(#hatch)"/></svg>
<div class="big" style="left:824px;top:557px;width:81px;height:19px;text-align:right;padding-right:2px;">31:55</div>
<div style="left:906px;top:557px;width:81px;height:19px;background:#f2dcdb;"></div>
<div class="big" style="left:906px;top:557px;width:81px;height:19px;text-align:right;padding-right:2px;">- 0:05</div>
<div class="c r" style="left:53px;top:577px;width:56px;height:18px;">3</div>
<div class="c l" style="left:110px;top:577px;width:154px;height:18px;">Francisco Cruz</div>
<div class="c l" style="left:265px;top:577px;width:148px;height:18px;">lunes 20 julio 2020</div>
<div class="c r" style="left:414px;top:577px;width:81px;height:18px;">9:00 AM</div>
<div class="c r" style="left:496px;top:577px;width:81px;height:18px;">6:00 PM</div>
<div class="c r" style="left:578px;top:577px;width:81px;height:18px;">1:00</div>
<div class="c r" style="left:824px;top:577px;width:81px;height:18px;">8:00</div>
<div class="c r" style="left:53px;top:596px;width:56px;height:18px;">3</div>
<div class="c l" style="left:110px;top:596px;width:154px;height:18px;">Francisco Cruz</div>
<div class="c l" style="left:265px;top:596px;width:148px;height:18px;">martes 21 julio 2020</div>
<div class="c r" style="left:414px;top:596px;width:81px;height:18px;">9:00 AM</div>
<div class="c r" style="left:496px;top:596px;width:81px;height:18px;">5:50 PM</div>
<div class="c r" style="left:578px;top:596px;width:81px;height:18px;">1:00</div>
<div style="left:741px;top:596px;width:83px;height:19px;background:#e6b8b7;"></div>
<div class="c r" style="left:742px;top:596px;width:81px;height:18px;">0:10</div>
<div class="c r" style="left:824px;top:596px;width:81px;height:18px;">7:50</div>
<div style="left:905px;top:596px;width:82px;height:19px;background:#f2dcdb;"></div>
<div class="c r" style="left:906px;top:596px;width:81px;height:18px;">- 0:10</div>
<div class="c r" style="left:53px;top:615px;width:56px;height:18px;">3</div>
<div class="c l" style="left:110px;top:615px;width:154px;height:18px;">Francisco Cruz</div>
<div class="c l" style="left:265px;top:615px;width:148px;height:18px;">miércoles 22 julio 2020</div>
<div class="c r" style="left:414px;top:615px;width:81px;height:18px;">9:00 AM</div>
<div class="c r" style="left:496px;top:615px;width:81px;height:18px;">6:00 PM</div>
<div class="c r" style="left:578px;top:615px;width:81px;height:18px;">1:00</div>
<div class="c r" style="left:824px;top:615px;width:81px;height:18px;">8:00</div>
<div class="c r" style="left:53px;top:634px;width:56px;height:18px;">3</div>
<div class="c l" style="left:110px;top:634px;width:154px;height:18px;">Francisco Cruz</div>
<div class="c l" style="left:265px;top:634px;width:148px;height:18px;">jueves 23 julio 2020</div>
<div class="c r" style="left:414px;top:634px;width:81px;height:18px;">9:00 AM</div>
<div class="c r" style="left:496px;top:634px;width:81px;height:18px;">6:00 PM</div>
<div class="c r" style="left:578px;top:634px;width:81px;height:18px;">1:00</div>
<div class="c r" style="left:824px;top:634px;width:81px;height:18px;">8:00</div>
<div style="left:906px;top:653px;width:81px;height:3px;background:#f2dcdb;"></div>
<div style="left:264px;top:149px;width:1px;height:107px;background:#2d3135;"></div>
<div style="left:263px;top:256px;width:2px;height:400px;background:#2d3135;"></div>
<div style="left:413px;top:237px;width:574px;height:2px;background:#2d3135;"></div>
<div style="left:412px;top:237px;width:2px;height:419px;background:#2d3135;"></div>
<div style="left:53px;top:256px;width:360px;height:2px;background:#2d3135;"></div>
<div style="left:53px;top:307px;width:934px;height:2px;background:#2d3135;"></div>
<div style="left:263px;top:256px;width:2px;height:53px;background:#2d3135;"></div>
<div style="left:53px;top:442px;width:934px;height:1px;background:#2d3135;"></div>
<div style="left:53px;top:576px;width:934px;height:1px;background:#2d3135;"></div>
<div style="left:988px;top:168px;width:16px;height:488px;background:#fff;"></div>
<div style="left:992px;top:185px;width:8px;height:121px;background:#b9b9b9;"></div>
<svg style="left:993px;top:175px" width="6" height="3" viewBox="0 0 6 3"><path d="M3 0L6 3H0Z" fill="#8a8a8a"/></svg>
<svg style="left:993px;top:646px" width="6" height="3" viewBox="0 0 6 3"><path d="M0 0H6L3 3Z" fill="#8a8a8a"/></svg>
<div style="left:32px;top:656px;width:972px;height:17px;background:#fff;"></div>
<div style="left:32px;top:656px;width:956px;height:1px;background:#c6c6c6;"></div>
<div style="left:49px;top:661px;width:461px;height:8px;background:#b9b9b9;"></div>
<svg style="left:39px;top:662px" width="3" height="6" viewBox="0 0 3 6"><path d="M3 0V6L0 3Z" fill="#8a8a8a"/></svg>
<svg style="left:977px;top:662px" width="3" height="6" viewBox="0 0 3 6"><path d="M0 0V6L3 3Z" fill="#8a8a8a"/></svg>
<div style="left:1px;top:674px;width:1034px;height:28px;background:#dedede;"></div>
<div style="left:28px;top:683px;width:400px;height:16px;font-size:11px;color:#222;line-height:16px;letter-spacing:-0.05px;">C:\Program Files (x86)\Reloj Checador\Data\Demo.ta2</div>
<div style="left:857px;top:683px;width:80px;height:16px;font-size:11px;color:#222;line-height:16px;letter-spacing:-0.4px;">Administrador</div>
<div style="left:956px;top:683px;width:60px;height:16px;font-size:11px;color:#222;line-height:16px;letter-spacing:0.1px;">1.8.1.12</div>
<svg style="left:0;top:674px" width="1036" height="29" viewBox="0 674 1036 29">
<defs>
<linearGradient id="gDb" x1="0" y1="0" x2="1" y2="0"><stop offset="0" stop-color="#d98a20"/><stop offset="0.3" stop-color="#fff3c4"/><stop offset="0.7" stop-color="#f2b23a"/><stop offset="1" stop-color="#cf7f18"/></linearGradient>
<linearGradient id="gKey" x1="0" y1="0" x2="1" y2="1"><stop offset="0" stop-color="#fde9a0"/><stop offset="1" stop-color="#e9a521"/></linearGradient>
<linearGradient id="gQ" x1="0" y1="0" x2="0" y2="1"><stop offset="0" stop-color="#5aa0ea"/><stop offset="1" stop-color="#1f5fc4"/></linearGradient>
</defs>
<!-- database -->
<rect x="10.3" y="682.3" width="11.6" height="14.2" rx="2.2" fill="url(#gDb)" stroke="#c97c1c" stroke-width="0.7"/>
<path d="M10.5 687.3Q16 688.8 21.7 687.3M10.5 691.6Q16 693.1 21.7 691.6" fill="none" stroke="#c97c1c" stroke-width="0.9"/>
<!-- key -->
<g transform="translate(844 689.5) rotate(-38)">
<circle cx="5" cy="0" r="4.3" fill="url(#gKey)" stroke="#d9961e" stroke-width="0.9"/>
<circle cx="6.6" cy="0" r="1.1" fill="#dfdfdf" stroke="#d9961e" stroke-width="0.5"/>
<path d="M1 -1.5H-8.5L-10 0L-8.5 1.6H-7.2V3.4H-5.2V1.6H-3.8V3H-2V1.6H1Z" fill="url(#gKey)" stroke="#d9961e" stroke-width="0.8" stroke-linejoin="round"/>
</g>
<!-- version -->
<rect x="935.5" y="682.5" width="9" height="11" fill="#f7f9fd" stroke="#8aa0c8" stroke-width="0.9"/>
<path d="M937 685.5H941M937 687.5H941M937 689.5H941M937 691.5H941" stroke="#8aa0c8" stroke-width="0.8"/>
<rect x="940.5" y="685.5" width="9.5" height="11" rx="1" fill="url(#gQ)" stroke="#1b4fa8" stroke-width="0.9"/>
<text x="945.3" y="694.6" font-family="'Liberation Sans',sans-serif" font-size="9.5" font-weight="bold" fill="#fff" text-anchor="middle">?</text>
<!-- grip -->
<g fill="#8c8c8c">
<rect x="1030" y="689" width="2" height="2"/>
<rect x="1026" y="693" width="2" height="2"/><rect x="1030" y="693" width="2" height="2"/>
<rect x="1022" y="697" width="2" height="2"/><rect x="1026" y="697" width="2" height="2"/><rect x="1030" y="697" width="2" height="2"/>
</g>
</svg>

<div style="left:0px;top:701px;width:1036px;height:1px;background:#9aa1aa;"></div>
<div style="left:0px;top:702px;width:1036px;height:1px;background:#4f5a69;"></div>
</body></html>
